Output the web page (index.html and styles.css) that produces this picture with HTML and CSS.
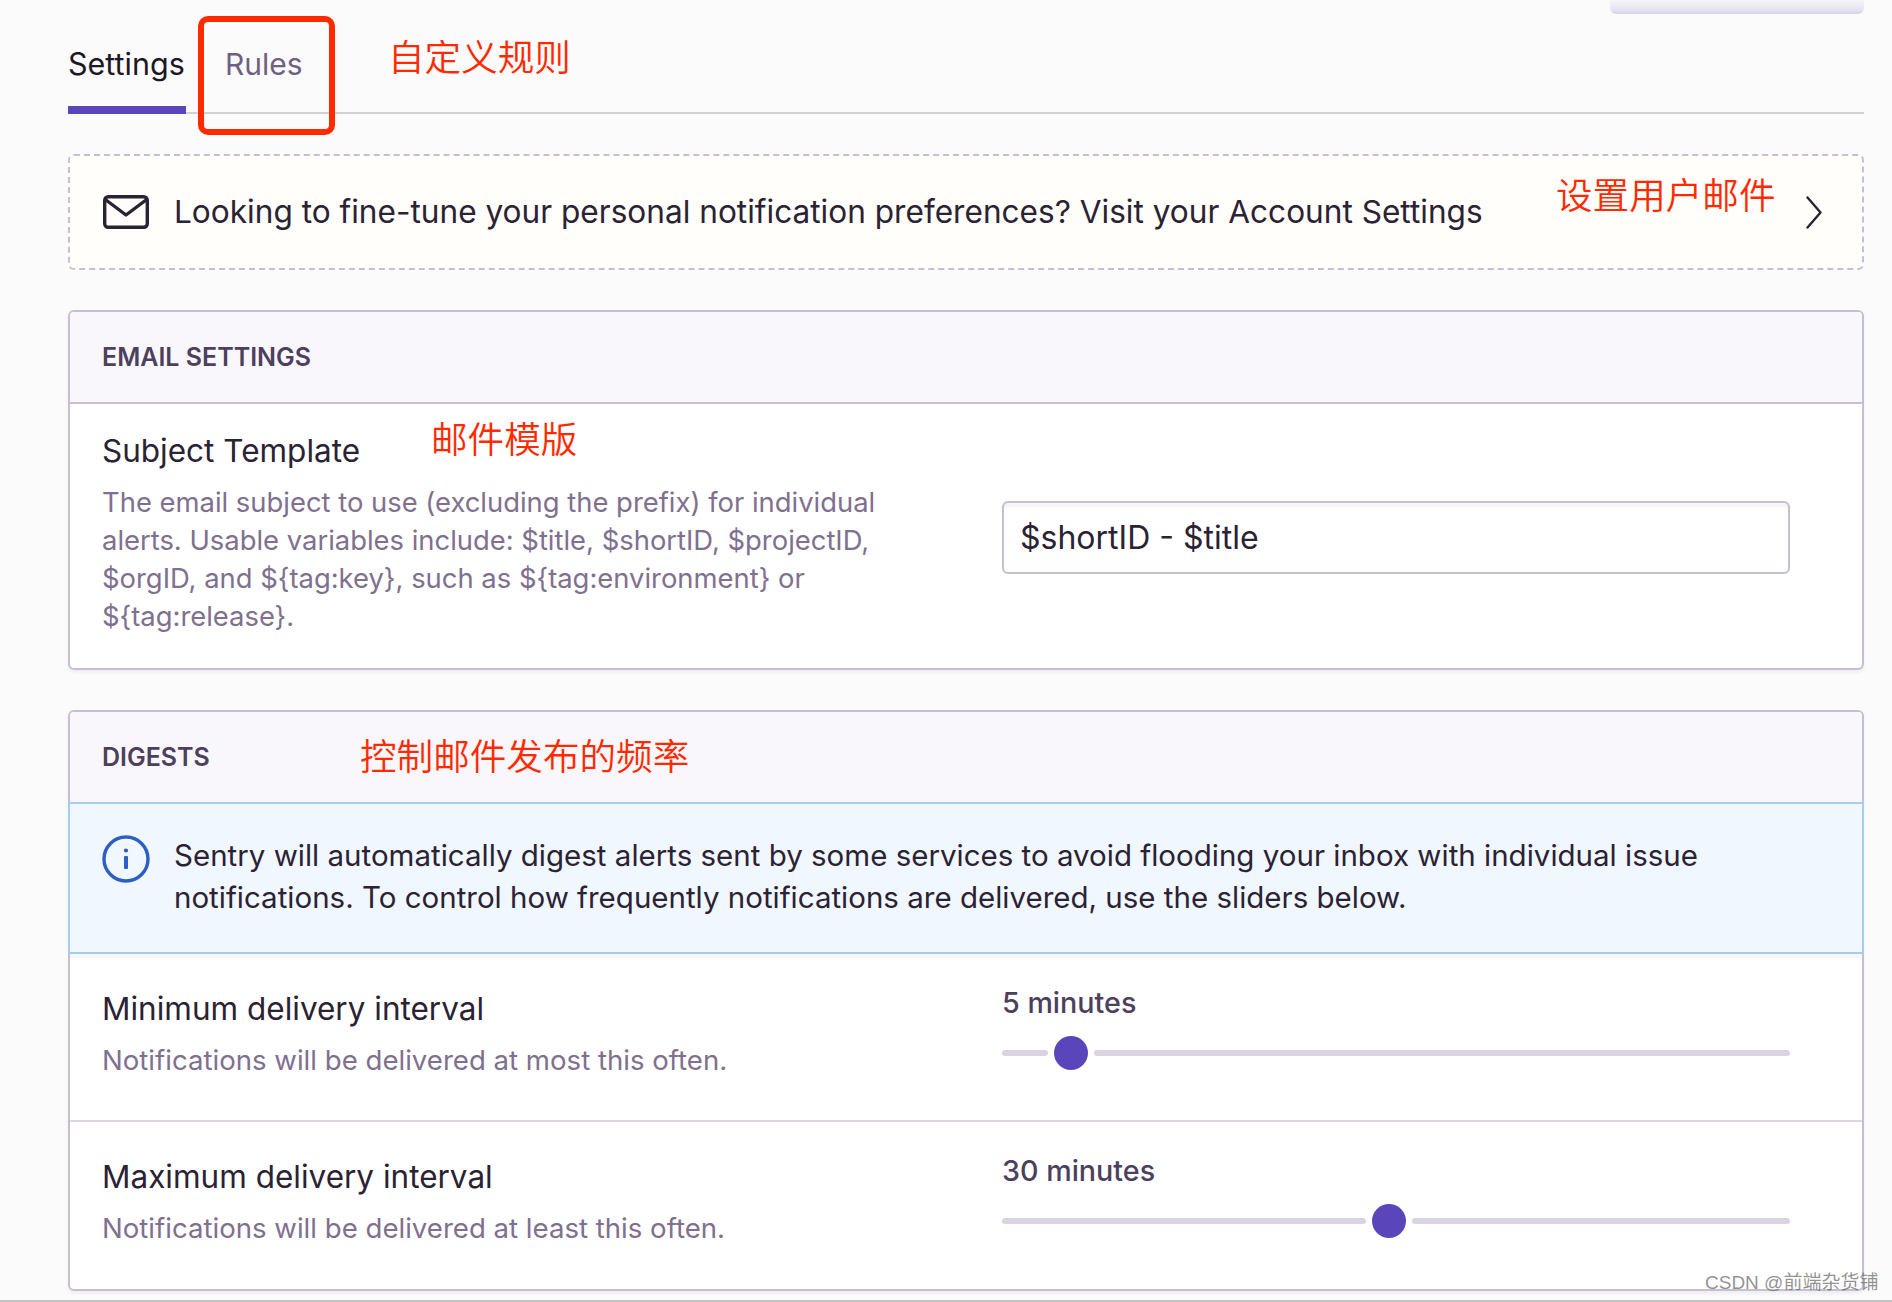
FILE: index.html
```html
<!DOCTYPE html>
<html lang="en">
<head>
<meta charset="utf-8">
<title>Notifications</title>
<link rel="stylesheet" href="styles.css">
</head>
<body>
<div class="page">
  <div class="topbar"><div class="stub"></div></div>
  <nav class="tabs">
    <a class="tab tab-active">Settings</a>
    <a class="tab">Rules</a>
  </nav>
  <div class="alert">
    <svg class="mail" viewBox="0 0 46 34" fill="none" stroke="#2b2233" stroke-width="3.4" stroke-linejoin="round" stroke-linecap="round"><rect x="1.7" y="1.7" width="42.6" height="30.6" rx="3.5"/><path d="M3 5 L23 20 L43 5"/></svg>
    <span class="alert-text">Looking to fine-tune your personal notification preferences? Visit your Account Settings</span>
    <svg class="chev" viewBox="0 0 16 33" fill="none" stroke="#2b2233" stroke-width="2.4" stroke-linecap="round" stroke-linejoin="round"><path d="M1.5 1.5 L14.5 16.5 L1.5 31.5"/></svg>
  </div>
  <section class="card">
    <header class="card-head">Email Settings</header>
    <div class="row row-email">
      <div class="row-info">
        <div class="row-title">Subject Template</div>
        <div class="row-desc">The email subject to use (excluding the prefix) for individual<br>alerts. Usable variables include: $title, $shortID, $projectID,<br>$orgID, and ${tag:key}, such as ${tag:environment} or<br>${tag:release}.</div>
      </div>
      <input class="field" type="text" value="$shortID - $title">
    </div>
  </section>
  <section class="card">
    <header class="card-head">Digests</header>
    <div class="info">
      <svg class="info-icon" viewBox="0 0 48 48" fill="none"><circle cx="24" cy="24" r="22" stroke="#2c5fc4" stroke-width="3.4"/><circle cx="24" cy="15.5" r="2.1" fill="#2c5fc4"/><rect x="22" y="21" width="4" height="13" rx="1" fill="#2c5fc4"/></svg>
      <p class="info-text">Sentry will automatically digest alerts sent by some services to avoid flooding your inbox with individual issue<br>notifications. To control how frequently notifications are delivered, use the sliders below.</p>
    </div>
    <div class="row row-digest row-divided">
      <div class="row-info">
        <div class="row-title">Minimum delivery interval</div>
        <div class="row-desc">Notifications will be delivered at most this often.</div>
      </div>
      <div class="slider-box">
        <div class="slider-label">5 minutes</div>
        <div class="slider"><span class="seg" style="width:46px"></span><span class="thumb"></span><span class="seg seg-rest"></span></div>
      </div>
    </div>
    <div class="row row-digest">
      <div class="row-info">
        <div class="row-title">Maximum delivery interval</div>
        <div class="row-desc">Notifications will be delivered at least this often.</div>
      </div>
      <div class="slider-box">
        <div class="slider-label">30 minutes</div>
        <div class="slider"><span class="seg" style="width:364px"></span><span class="thumb"></span><span class="seg seg-rest"></span></div>
      </div>
    </div>
  </section>
  <div class="note note-rules">自定义规则</div>
  <div class="note note-user">设置用户邮件</div>
  <div class="note note-template">邮件模版</div>
  <div class="note note-digest">控制邮件发布的频率</div>
  <div class="redbox"></div>
  <div class="watermark">CSDN @前端杂货铺</div>
</div>
</body>
</html>
```
FILE: styles.css
```css
* { box-sizing: border-box; }
html, body { margin: 0; padding: 0; }
body {
  background: #fbfbfc;
  font-family: Inter, "Liberation Sans", sans-serif;
  color: #2b2233;
}
.page {
  position: relative;
  height: 1302px;
  overflow: hidden;
  padding: 0 28px 0 68px;
  border-bottom: 2px solid #c2c2c2;
}
.topbar { display: flex; justify-content: flex-end; height: 14px; }
.stub {
  width: 254px;
  height: 14px;
  background: linear-gradient(#f6f5fb, #e6e3f0 70%, #d6d2e6);
  border-radius: 0 0 6px 6px;
}
.tabs {
  display: flex;
  gap: 39px;
  height: 100px;
  border-bottom: 2px solid #d2d2d4;
  margin-bottom: 40px;
}
.tab {
  height: 100px;
  padding-top: 30px;
  font-size: 30px;
  line-height: 40px;
  color: #6f6082;
}
.tab-active { width: 118px; font-size: 30.5px; color: #1d1825; border-bottom: 8px solid #5a46ba; }
.alert {
  display: flex;
  align-items: center;
  height: 116px;
  padding: 0 40px 0 33px;
  margin-bottom: 40px;
  background: #fffefa;
  border: 2px dashed #c6bfd0;
  border-radius: 6px;
}
.mail { width: 46px; height: 34px; flex: none; }
.alert-text { flex: 1; margin-left: 25px; font-size: 31.6px; line-height: 40px; }
.chev { width: 16px; height: 33px; flex: none; }
.card {
  margin-bottom: 40px;
  background: #fff;
  border: 2px solid #c6bed3;
  border-radius: 6px;
  box-shadow: 0 3px 3px rgba(40, 30, 60, .05);
}
.card-head {
  height: 92px;
  padding-left: 32px;
  background: #f9f7fb;
  border-bottom: 2px solid #c6bed3;
  border-radius: 4px 4px 0 0;
  font-size: 25px;
  font-weight: 600;
  line-height: 90px;
  text-transform: uppercase;
  color: #4d3f5e;
}
.row {
  display: grid;
  grid-template-columns: 900px 1fr;
  padding: 0 72px 0 32px;
}
.row-email { padding-top: 27px; padding-bottom: 33px; align-items: start; }
.row-digest { padding-top: 35px; height: 167px; }
.row-divided { height: 168px; border-bottom: 2px solid #dcd5e4; }
.info + .row { box-shadow: inset 0 4px 0 #f7f7f8; }
.row-title { font-size: 31.5px; line-height: 40px; color: #2b2233; }
.row-desc { margin-top: 12px; font-size: 27.4px; line-height: 38px; color: #80708f; }
.row-digest .row-desc { font-size: 27.6px; }
.field {
  display: block;
  width: 100%;
  height: 73px;
  margin-top: 70px;
  padding: 0 16px;
  background: #fff;
  border: 2px solid #c6bed3;
  border-radius: 6px;
  box-shadow: inset 0 4px 0 #f5f4f7;
  font: 32px Inter, "Liberation Sans", sans-serif;
  color: #2b2233;
}
.info {
  display: flex;
  height: 152px;
  margin: -2px -2px 0;
  padding: 30px 32px 0;
  background: #f0f7ff;
  border: 2px solid #a6cdea;
}
.info-icon { width: 48px; height: 48px; flex: none; margin-top: 1px; }
.info-text { margin: 0 0 0 24px; font-size: 29.5px; line-height: 42px; color: #2b2233; }
.slider-box { margin-top: -3px; }
.slider-label { font-size: 28.7px; font-weight: 500; line-height: 34px; color: #4d3f5e; }
.slider { display: flex; align-items: center; margin-top: 16px; }
.seg { height: 6px; background: #dbd3e2; border-radius: 3px; }
.seg-rest { flex: 1; }
.thumb { width: 34px; height: 34px; margin: 0 6px; border-radius: 50%; background: #5a46ba; }
.note {
  position: absolute;
  font-family: "Noto Sans CJK SC", sans-serif;
  font-size: 36.6px;
  font-weight: 350;
  line-height: 44px;
  color: #ff2a00;
  white-space: nowrap;
}
.note-rules { left: 388px; top: 34px; }
.note-user { left: 1556px; top: 172px; }
.note-template { left: 431px; top: 416px; }
.note-digest { left: 360px; top: 733px; }
.redbox {
  position: absolute;
  left: 198px;
  top: 16px;
  width: 137px;
  height: 119px;
  border: 6px solid #ff2a00;
  border-radius: 10px;
}
.watermark {
  position: absolute;
  left: 1705px;
  top: 1270px;
  font-family: "Liberation Sans", "Noto Sans CJK SC", sans-serif;
  font-size: 19px;
  line-height: 26px;
  color: rgba(110, 110, 110, .75);
  white-space: nowrap;
}
```
